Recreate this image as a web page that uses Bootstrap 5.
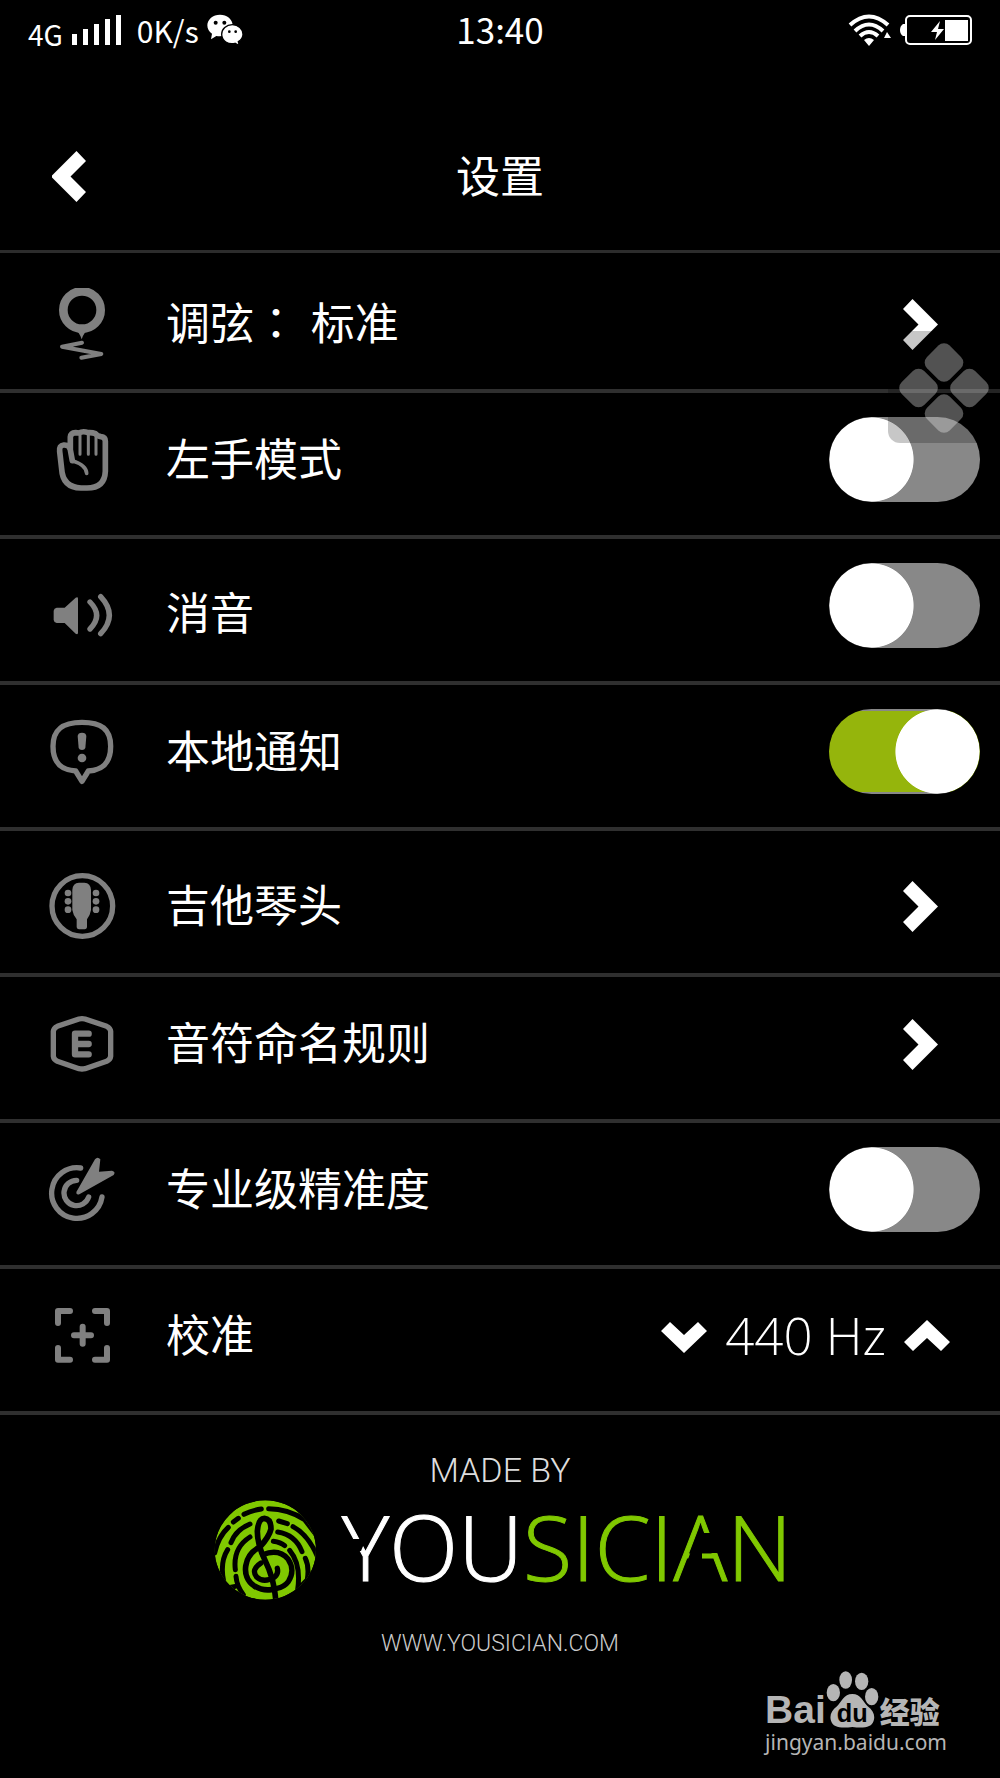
<!DOCTYPE html>
<html lang="zh-CN">
<head>
<meta charset="utf-8">
<meta name="viewport" content="width=device-width, initial-scale=1">
<title>设置</title>
<link href="https://cdn.jsdelivr.net/npm/bootstrap@5.3.0/dist/css/bootstrap.min.css" rel="stylesheet">
<style>
  body { background: #000; color: #fff; font-family: "Noto Sans CJK SC", sans-serif; }
  svg { display: block; flex: none; }
  .tri { display: grid; grid-template-columns: 1fr auto 1fr; }
  .status { height: 60px; padding: 0 28px; line-height: 1; }
  .net { font-size: 28px; padding-top: 8px; }
  .rate { font-size: 30px; }
  .clock { font-size: 35px; padding-bottom: 4px; }
  .topbar { height: 193px; padding: 42px 48px 0; border-bottom: 3px solid #2c2c2c; }
  .topbar h1, .setting { font-size: 44px; line-height: 60px; font-weight: 400; }
  .topbar h1, .item > span { padding-bottom: 4px; }
  .wide-colon { font-family: "Noto Sans CJK TC", sans-serif; margin-right: 3px; }
  .chev { fill: #fff; }
  .setting { height: 146px; padding: 0 20px 10px 48px; border-bottom: 4px solid #2f2f2f; color: #fff; }
  .setting:first-child { height: 140px; padding-bottom: 0; }
  .setting.lower > .item { padding-top: 16px; }
  .setting:first-child > .item { padding-top: 4px; }
  .item { gap: 50px; color: #fff; }
  .item .chev { margin-right: 42px; }
  .item > svg { margin-top: 2px; }
  .glyph { width: 68px; height: 72px; fill: none; stroke: #808080; stroke-linecap: round; stroke-linejoin: round; }
  .glyph .solid { fill: #808080; stroke: none; }
  .toggle { appearance: none; width: 151px; height: 85px; margin: 0; border-radius: 43px; flex: none;
    background: radial-gradient(circle closest-side, #fff 98%, transparent) left / 85px 85px no-repeat #888; }
  .toggle:checked { background: radial-gradient(circle closest-side, #fff 98%, transparent) right / 85px 85px no-repeat,
    linear-gradient(#888 0 2px, #95b50c 2px 83px, #888 83px); }
  .pitch { gap: 18px; margin-right: 30px; }
  .hertz { font-family: "Open Sans", sans-serif; font-weight: 300; font-size: 51px; }
  .plain { background: none; border: 0; padding: 0; }
  .assist { top: 331px; right: 0; width: 112px; height: 112px; border-radius: 12px; background: rgba(0,0,0,.22); padding: 0; border: 0; }
  .made { font: 300 34px/40px Roboto, sans-serif; color: #ddd; padding-top: 35px; }
  .brand { gap: 26px; margin-top: 10px; padding-left: 6px; color: #fff; }
  .wordmark { font: 300 90px/92px "Open Sans", sans-serif; -webkit-text-stroke: 1px currentColor; }
  .notched { position: relative; display: inline-block; }
  .notched svg { position: absolute; left: 0; top: 0; fill: #000; }
  .lime { color: #80c800; }
  .site { font: 300 23px/30px Roboto, sans-serif; color: #ccc; margin-top: 29px; }
  .mark-bd { color: #b5b5b5; padding-right: 53px; margin-top: 11px; }
  .bai { font: 700 39px/36px "Liberation Sans", sans-serif; }
  .jing { font-size: 30px; line-height: 36px; font-weight: 900; }
  .domain { font: 400 21px/28px "Noto Sans", sans-serif; }
</style>
</head>
<body>
<div class="position-relative">
<div class="status tri align-items-center">
  <div class="d-flex align-items-center">
    <span class="net">4G</span>
    <svg class="ms-2" width="50" height="32" viewBox="0 0 50 32" fill="#fff"><path d="M1 20h5v11H1zM12 15h5v16h-5zM23 10h5v21h-5zM34 5h5v26h-5zM45 1h5v30h-5z"/></svg>
    <span class="rate ms-3">0K/s</span>
    <svg class="ms-2" width="36" height="32" viewBox="618 48 108 96"><path fill="#fff" d="M657 50c-21 0-38 14-38 32 0 11 5 19 14 25l-3 17 16-10c25 5 49-9 49-32 0-18-17-32-38-32z"/><path fill="#fff" stroke="#000" stroke-width="4" d="M694 80c-18 0-32 13-32 29 0 20 20 32 40 27l13 7-3-12c9-5 14-13 14-22 0-16-14-29-32-29z"/><g fill="#000"><circle cx="644" cy="74" r="6"/><circle cx="670" cy="74" r="6"/><circle cx="685" cy="101" r="4"/><circle cx="704" cy="101" r="4"/></g></svg>
  </div>
  <span class="clock">13:40</span>
  <div class="d-flex justify-content-end align-items-center">
    <svg width="43" height="32" viewBox="0 0 43 32" fill="none" stroke="#fff" stroke-width="4"><path d="M2 11Q21 -6 40 11M7 17Q21 4 35 17M12 22Q21 14 30 22"/><path fill="#fff" stroke="none" d="M16 26q5-4 10 0l-5 6zM36 24l3-6 4 6z"/></svg>
    <svg class="ms-2" width="73" height="30" viewBox="0 0 73 30"><path fill="#fff" d="M6 9v12H4q-3-2-3-6t3-6zM46 5h23v21H46zM41 6L32 17h6l-2 8 9-11h-6z"/><rect x="7" y="1" width="65" height="28" rx="4" fill="none" stroke="#fff" stroke-width="2"/></svg>
  </div>
</div>

<header class="topbar tri align-items-center">
  <a href="#" aria-label="返回"><svg class="chev ms-1" width="35" height="51" viewBox="1 0 35 51"><path d="M25.500 0L0 25.500 25.500 51 35 41 19.500 25.500 35 10z"/></svg></a>
  <h1 class="m-0">设置</h1>
</header>

<main class="d-flex flex-column">
  <div class="setting lower d-flex">
    <a href="#" class="item d-flex align-items-center flex-fill text-decoration-none">
      <svg class="glyph" viewBox="144 84 204 216"><circle cx="246" cy="150" r="56" stroke-width="26"/><path class="solid" d="M222 207q16 8 23 31 7-23 24-31z"/><path stroke-width="12" d="M246 248l-60 12 118 22-60 11"/></svg>
      <span class="flex-fill">调弦<span class="wide-colon" lang="zh-TW">：</span> 标准</span>
      <svg class="chev" width="35" height="51" viewBox="0 0 35 51"><path d="M9.500 0L35 25.500 9.500 51 0 41 15.500 25.500 0 10z"/></svg>
    </a>
  </div>
  <div class="setting d-flex align-items-center">
    <label class="item d-flex align-items-center flex-fill" for="lefty">
      <svg class="glyph" viewBox="144 496 204 216"><path stroke-width="17" d="M217 606l-6-33v-38q1-12 16-13l10 1q12-7 27-1 13-1 22 3 7 8 17 9 13 1 13 14v90q-2 50-55 50h-18q-55-2-58-57l-6-53q-2-18 12-19 17-1 20 14"/><path stroke-width="9" d="M240 530v57M265 528v59M288 534v53"/><path stroke-width="11" d="M217 606q42 13 43 38"/></svg>
      <span>左手模式</span>
    </label>
    <input class="toggle" type="checkbox" role="switch" id="lefty">
  </div>
  <div class="setting lower d-flex align-items-center">
    <label class="item d-flex align-items-center flex-fill" for="mute">
      <svg class="glyph" viewBox="144 144 204 216"><path class="solid" d="M161 242q1-8 9-9h24l33-30q7-4 7 3v102q0 7-7 3l-33-32h-24q-8-1-9-9z"/><path stroke-width="16" d="M270 216q40 41 0 81M302 200q52 56 0 111"/></svg>
      <span>消音</span>
    </label>
    <input class="toggle" type="checkbox" role="switch" id="mute">
  </div>
  <div class="setting d-flex align-items-center">
    <label class="item d-flex align-items-center flex-fill" for="notify">
      <svg class="glyph" viewBox="144 559 204 216"><path stroke-width="16" d="M246 578c-58 0-87 20-87 72s27 71 68 74l19 31 19-31c41-3 67-22 67-74s-28-72-86-72z"/><path class="solid" d="M233 619q1-10 13-10t13 10l-3 36q-2 6-10 6t-10-6z"/><circle class="solid" cx="246" cy="685" r="13"/></svg>
      <span>本地通知</span>
    </label>
    <input class="toggle" type="checkbox" role="switch" id="notify" checked>
  </div>
  <div class="setting lower d-flex align-items-center">
    <a href="#" class="item d-flex align-items-center flex-fill text-decoration-none">
      <svg class="glyph" viewBox="144 122 204 216"><circle cx="247" cy="230" r="91" stroke-width="16"/><path class="solid" d="M217 182q1-21 20-22h16q19 1 20 22v60q-2 14-12 28v24q-1 6-7 6h-17q-6 0-7-6v-24q-11-14-13-28z"/><g class="solid"><circle cx="204" cy="191" r="10"/><circle cx="204" cy="216" r="10"/><circle cx="204" cy="241" r="10"/><circle cx="288" cy="191" r="10"/><circle cx="288" cy="216" r="10"/><circle cx="288" cy="241" r="10"/></g></svg>
      <span class="flex-fill">吉他琴头</span>
      <svg class="chev" width="35" height="51" viewBox="0 0 35 51"><path d="M9.500 0L35 25.500 9.500 51 0 41 15.500 25.500 0 10z"/></svg>
    </a>
  </div>
  <div class="setting d-flex align-items-center">
    <a href="#" class="item d-flex align-items-center flex-fill text-decoration-none">
      <svg class="glyph" viewBox="144 534 204 216"><path stroke-width="16" d="M237 567q9-2 18 0l65 22q11 5 12 15v75q-1 10-12 15l-65 22q-9 2-18 0l-65-22q-11-5-12-15v-75q1-10 12-15z"/><path stroke-width="19" d="M266 611h-41v62h41M225 642h41"/></svg>
      <span class="flex-fill">音符命名规则</span>
      <svg class="chev" width="35" height="51" viewBox="0 0 35 51"><path d="M9.500 0L35 25.500 9.500 51 0 41 15.500 25.500 0 10z"/></svg>
    </a>
  </div>
  <div class="setting d-flex align-items-center">
    <label class="item d-flex align-items-center flex-fill" for="pro">
      <svg class="glyph" viewBox="146 102 204 216"><path stroke-width="16" d="M244 144A76 76 0 1 0 308 231M232 181A38 38 0 1 0 268 231"/><path class="solid" d="M231 216l56-98q8-10 16 0l-4 37 39-3q12 3 5 13l-103 58q-10 3-9-7z"/></svg>
      <span>专业级精准度</span>
    </label>
    <input class="toggle" type="checkbox" role="switch" id="pro">
  </div>
  <div class="setting d-flex align-items-center">
    <div class="item d-flex align-items-center flex-fill">
      <svg class="glyph" viewBox="144 539 204 216"><path stroke-width="18" d="M174 608v-36h36M285 572h36v36M321 683v35h-36M210 718h-36v-35M248 619v51M222 645h51"/></svg>
      <span>校准</span>
    </div>
    <div class="pitch d-flex align-items-center">
      <button class="plain pt-1" type="button" aria-label="降低"><svg class="chev" width="46" height="31" viewBox="0 0 46 31"><path d="M9 0L0 9l23 22L46 9 37 0 23 13z"/></svg></button>
      <output class="hertz">440 Hz</output>
      <button class="plain" type="button" aria-label="升高"><svg class="chev" width="46" height="31" viewBox="0 0 46 31"><path d="M9 31L0 22 23 0l23 22-9 9-14-13z"/></svg></button>
    </div>
  </div>
</main>

<footer class="text-center">
  <div class="made">MADE BY</div>
  <div class="brand d-flex justify-content-center align-items-start">
    <svg width="102" height="100" viewBox="40 181 306 300"><defs><clipPath id="disc"><ellipse cx="194" cy="331" rx="152" ry="149"/></clipPath></defs>
      <g clip-path="url(#disc)"><ellipse cx="194" cy="331" rx="152" ry="149" fill="#80c800"/>
      <g fill="none" stroke="#000" stroke-width="15" stroke-linecap="round" stroke-linejoin="round">
        <path d="M204 207Q262 207 312 240L350 290M182 208Q153 212 130 224M113 236L98 247M83 263Q52 292 42 340M234 244L260 252M277 261Q322 285 350 350M148 253Q104 272 91 309M81 330Q57 368 69 425L50 400M231 277Q284 285 304 336M314 356Q326 380 320 420L345 390M148 292Q96 325 104 390M106 410Q108 438 128 465M104 440L80 445M218 305Q240 308 252 318M267 332Q302 374 291 450L320 420"/>
        <path stroke-width="17" d="M226 490Q222 420 193 362 170 315 170 275 173 236 191 236 211 238 211 268 206 290 178 322C130 345 118 410 161 439Q185 454 212 450"/>
        <path stroke-width="16" d="M186 345Q235 326 262 358 285 392 263 426 250 443 229 446M181 370Q150 390 168 412 190 432 222 412 234 402 230 386"/>
      </g></g></svg>
    <span class="wordmark"><span class="notched">Y<svg width="50" height="92" viewBox="0 4 50 92"><path d="M6 43h18l-5 12H6z"/></svg></span>OU<span class="lime">SICI<span class="notched">A<svg width="54" height="92" viewBox="0 4 54 92"><path d="M28 37h26v20H29v9H14l4-11z"/></svg></span>N</span></span>
  </div>
  <div class="site">WWW.YOUSICIAN.COM</div>
  <div class="mark-bd d-flex justify-content-end">
    <div>
      <div class="d-flex align-items-end">
        <span class="bai">Bai</span>
        <svg width="54" height="58" viewBox="234 62 162 174" fill="#b5b5b5"><ellipse cx="256" cy="130" rx="20" ry="26"/><ellipse cx="293" cy="92" rx="19" ry="26"/><ellipse cx="341" cy="96" rx="20" ry="26"/><ellipse cx="371" cy="142" rx="20" ry="26"/><path d="M313 134c26 0 32 24 46 37 17 13 23 27 18 43-6 20-28 23-64 19-36 4-58 1-64-19-5-16 1-30 18-43 14-13 20-37 46-37z"/><text x="266" y="217" font-family="Liberation Sans" font-weight="700" font-size="76" fill="#000">du</text></svg>
        <span class="jing">经验</span>
      </div>
      <div class="domain">jingyan.baidu.com</div>
    </div>
  </div>
</footer>

<button class="assist position-absolute" type="button" aria-label="悬浮球"><svg width="112" height="112" viewBox="0 0 112 112" fill="#fff" fill-opacity=".32"><g transform="rotate(45 56 57)"><rect x="22" y="23" width="32" height="32" rx="8"/><rect x="58" y="23" width="32" height="32" rx="8"/><rect x="22" y="59" width="32" height="32" rx="8"/><rect x="58" y="59" width="32" height="32" rx="8"/></g></svg></button>
</div>
<script src="https://cdn.jsdelivr.net/npm/bootstrap@5.3.0/dist/js/bootstrap.bundle.min.js"></script>
</body>
</html>
